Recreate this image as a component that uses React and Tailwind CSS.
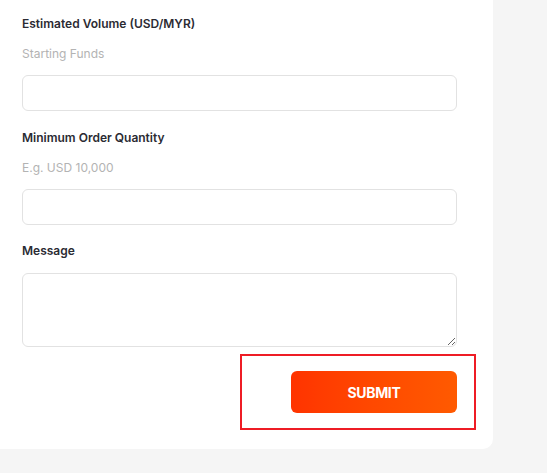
import React from "react";

const Field = ({ label, hint, top }) => (
  <div className={top}>
    <label className="block text-[12px] leading-4 font-semibold text-[#2b2b33]">{label}</label>
    {hint && <p className="mt-[14px] text-[12px] leading-4 text-[#b3b3b3]">{hint}</p>}
    <input
      type="text"
      className="mt-[13px] block w-full h-[36px] rounded-[6px] border border-[#e2e2e2] bg-white px-3 text-[13px] outline-none"
    />
  </div>
);

export default function App() {
  return (
    <div className="min-h-[473px] bg-[#f5f5f5] font-['Inter',sans-serif]">
      <div className="w-[493px] bg-white rounded-br-[10px] pl-[22px] pr-[36px] pt-[16px] pb-[19px]">
        <Field label="Estimated Volume (USD/MYR)" hint="Starting Funds" />
        <Field label="Minimum Order Quantity" hint="E.g. USD 10,000" top="mt-[19px]" />
        <div className="mt-[18px]">
          <label className="block text-[12px] leading-4 font-semibold text-[#2b2b33]">Message</label>
          <textarea className="mt-[14px] block w-full h-[74px] rounded-[6px] border border-[#e2e2e2] bg-white px-3 py-2 text-[13px] outline-none" />
        </div>
        <div className="mt-[7px] flex justify-end -mr-[19px]">
          <div className="border-2 border-[#ee1c25] pl-[49px] pr-[17px] py-[15px]">
            <button className="w-[166px] h-[42px] rounded-[6px] bg-gradient-to-r from-[#ff3300] to-[#ff5a00] text-white text-[14px] font-bold tracking-tight">
              SUBMIT
            </button>
          </div>
        </div>
      </div>
    </div>
  );
}
